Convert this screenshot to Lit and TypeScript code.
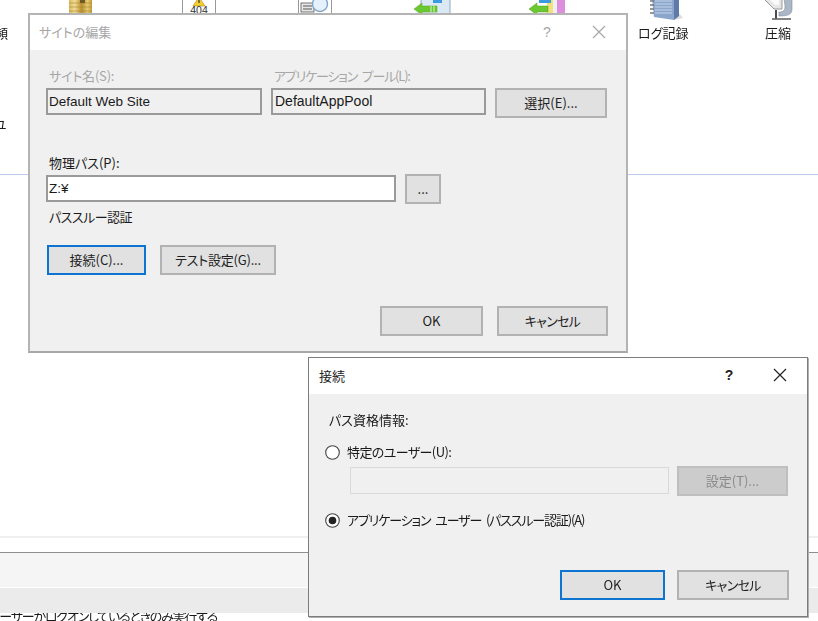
import { LitElement, html, css, svg } from "lit";
import { customElement } from "lit/decorators.js";

const closeIcon = (color: string) => html`<svg class="x" width="14" height="14" viewBox="0 0 14 14"><path d="M1 1L13 13M13 1L1 13" stroke="${color}" stroke-width="1.2" fill="none"/></svg>`;

const coin = svg`<defs><linearGradient id="gold" x1="0" x2="1" y1="0" y2="0">
  <stop offset="0" stop-color="#d9b95c"/><stop offset=".25" stop-color="#f1dc94"/><stop offset=".55" stop-color="#b98f2f"/><stop offset=".8" stop-color="#e6cb72"/><stop offset="1" stop-color="#c29c3c"/></linearGradient></defs>
  <rect x="1" y="-3" width="23" height="18" fill="url(#gold)"/>
  <path d="M1 3h23M1 7h23M1 11h23" stroke="#a5832c" stroke-width=".8" opacity=".7"/>
  <rect x="12" y="-1" width="5" height="4" fill="#6e5a24"/>`;

@customElement("app-root")
export class AppRoot extends LitElement {
  static styles = css`
    :host { display: block; position: relative; width: 818px; height: 621px; overflow: hidden; background: #fff;
      font-family: "Noto Sans CJK JP", "Liberation Sans", sans-serif; font-size: 13px; color: #1a1a1a; font-feature-settings: "palt"; }
    .page { filter: blur(0.45px); width: 818px; height: 621px; position: relative; }
    .bg { display: flex; flex-direction: column; height: 621px; }
    .icons { height: 174px; border-bottom: 1px solid #bccbea; position: relative; }
    .gap { height: 361px; border-bottom: 2px solid #efefef; }
    .white { height: 14px; border-bottom: 1px solid #8e8e8e; }
    .band1 { height: 34px; background: #f5f5f5; border-bottom: 1px solid #fff; }
    .band2 { height: 25px; background: #ebebeb; }
    .status { height: 8px; overflow: hidden; white-space: nowrap; }
    .status span { display: block; margin-top: -6px; line-height: 18px; margin-left: -12px; letter-spacing: -1.25px; }
    .ico { position: absolute; top: 0; }
    .lbl { position: absolute; font-size: 13px; line-height: 16px; white-space: nowrap; top: 25px; }

    .dlg { position: absolute; box-sizing: border-box; background: #f0f0f0; display: flex; flex-direction: column; }
    .d1 { left: 28px; top: 13px; width: 600px; height: 340px; border: 2px solid #b4b4b4; border-bottom-color: #a8a8a8; }
    .d2 { left: 308px; top: 357px; width: 500px; height: 260px; border: 1px solid #7c7c7c; box-shadow: 1px 1px 0 #b0b0b0; }
    .title { background: #fff; display: flex; align-items: center; flex: none; }
    .d1 .title { height: 35px; padding: 0 20px 2px 9px; box-sizing: border-box; color: #a6a6a6; }
    .d2 .title { height: 36px; padding: 0 20px 2px 10px; box-sizing: border-box; color: #222; }
    .t { flex: 1; font-size: 13px; }
    .q { width: 14px; text-align: center; font-family: "Liberation Sans", sans-serif; font-size: 14px; margin-right: 38px; }
    .d2 .q { margin-right: 37px; font-weight: bold; }
    .body { flex: 1; display: flex; flex-direction: column; }
    .d1 .body { padding: 17px 18px 0 16px; }

    .lab { font-size: 13px; line-height: 18px; padding-left: 2px; }
    .dis { color: #a6a6a6; }
    .pool { letter-spacing: -1.2px; word-spacing: 3px; padding-left: 3px; }
    .site { letter-spacing: -0.2px; padding-left: 3px; }
    .field { box-sizing: border-box; height: 27px; border: 2px solid #9a9a9a; font-family: "Liberation Sans", "Noto Sans CJK JP", sans-serif;
      font-size: 13.5px; line-height: 23px; padding-left: 1px; color: #1a1a1a; }
    .field.ro { background: #f0f0f0; margin-top: 3px; }
    .field.wh { background: #fff; margin-top: 1px; }
    .field.wide { font-size: 14px; padding-left: 2px; }
    .btn { box-sizing: border-box; background: #e1e1e1; border: 2px solid #b2b2b2; display: flex; align-items: center; justify-content: center; font-size: 13px; color: #222; padding-bottom: 2px; }
    .btn.def { border-color: #0d74d1; }
    .btn.off { background: #cccccc; border-color: #bfbfbf; color: #8a8a8a; }
    .kana { letter-spacing: -0.7px; }
    .test { letter-spacing: -0.2px; }

    .tops { display: grid; grid-template-columns: 216px 215px 112px; column-gap: 9px; }
    .selcol { padding-top: 21px; }
    .sel { height: 30px; }
    .phys { margin-top: 35px; }
    .phys .lab { line-height: 20px; padding-left: 3px; }
    .path { display: flex; gap: 9px; margin-top: 1px; align-items: flex-start; }
    .path .field { width: 350px; }
    .dots { width: 36px; height: 30px; }
    .pass { margin-top: 3px; line-height: 20px; letter-spacing: -0.5px; padding-left: 3px; }
    .acts { display: flex; gap: 14px; margin-top: 18px; padding-left: 1px; }
    .acts .a { width: 99px; height: 30px; }
    .acts .b { width: 116px; height: 30px; }
    .foot { display: flex; justify-content: flex-end; gap: 14px; margin-top: 31px; }
    .foot .btn { height: 30px; }
    .foot .ok { width: 103px; }
    .foot .cancel { width: 111px; }

    .d2 .body { padding: 16px 18px 0 16px; }
    .creds { padding-left: 4px; line-height: 20px; }
    .radio { display: flex; align-items: center; gap: 7px; margin-top: 12px; line-height: 20px; }
    .r1 { letter-spacing: -0.6px; }
    .r2 { letter-spacing: -1.15px; word-spacing: 3px; }
    .circ { width: 15px; height: 15px; flex: none; }
    .spec { display: flex; gap: 8px; padding-left: 25px; margin-top: 4px; align-items: flex-start; }
    .spec .inp { width: 319px; height: 27px; box-sizing: border-box; background: #f0f0f0; border: 1px solid #d9d9d9; margin-top: 1px; }
    .spec .btn { width: 111px; height: 30px; }
    .app { margin-top: 14px; }
    .d2foot { display: flex; justify-content: flex-end; gap: 12px; margin-top: 40px; }
    .d2foot .btn { height: 30px; }
    .d2foot .ok { width: 105px; }
    .d2foot .cancel { width: 112px; }
  `;

  render() {
    return html`<div class="page">
      <div class="bg">
        <div class="icons">
          <div class="lbl" style="left:-5px">頻</div>
          <div class="lbl" style="left:-6px;top:116px">ユ</div>
          <svg class="ico" style="left:68px" width="26" height="16" viewBox="0 0 26 16">${coin}</svg>
          <svg class="ico" style="left:182px" width="35" height="16" viewBox="0 0 35 16">
            <rect x="0.5" y="-3" width="33" height="22" fill="#fff" stroke="#999"/>
            <path d="M17 -3L23 6H11Z" fill="#f5cf2f" stroke="#a88a10" stroke-width=".6"/>
            <path d="M17 0v3" stroke="#333" stroke-width="1.2"/>
            <text x="17" y="14" text-anchor="middle" font-family="Liberation Sans" font-size="10.5" fill="#333">404</text>
          </svg>
          <svg class="ico" style="left:298px" width="35" height="16" viewBox="0 0 35 16">
            <rect x="0.5" y="-3" width="33" height="22" fill="#fff" stroke="#999"/>
            <rect x="3" y="3" width="13" height="9" fill="#e8e8e8" stroke="#555" stroke-width=".8"/>
            <path d="M5 6h9M5 9h9" stroke="#555"/>
            <circle cx="22" cy="4" r="7.5" fill="#e6f2fb" stroke="#7ea5c8" stroke-width="1.4"/>
          </svg>
          <svg class="ico" style="left:413px" width="38" height="16" viewBox="0 0 38 16">
            <rect x="8" y="-3" width="29" height="17" rx="1" fill="#dbe8f5" stroke="#93a9c0"/>
            <path d="M20 -2h9v5h-9z" fill="#3b9ae0"/>
            <path d="M1 9L9 3V6H24V12H9V15Z" fill="#6cc832" stroke="#4da61f" stroke-width=".5"/>
            <path d="M18 6v6M21 6v6" stroke="#d9f5c0"/>
          </svg>
          <svg class="ico" style="left:529px" width="38" height="16" viewBox="0 0 38 16">
            <rect x="18" y="-3" width="6" height="17" fill="#f3e27a"/>
            <rect x="24" y="-3" width="4" height="17" fill="#eef0f5"/>
            <rect x="28" y="-3" width="8" height="17" fill="#dd8fdd"/>
            <path d="M10 -2h12v5H10z" fill="#3b9ae0"/>
            <path d="M0 9L8 3V6H19V12H8V15Z" fill="#6cc832" stroke="#4da61f" stroke-width=".5"/>
          </svg>
          <svg class="ico" style="left:648px" width="38" height="22" viewBox="0 0 38 22">
            <path d="M27 20L35 18L30 12Z" fill="#ddd"/>
            <path d="M4 -2H26V20L6 17Z" fill="#8aa6cc"/>
            <path d="M7 1h17M7 4h17M7 7h17M7 10h17M7 13h17" stroke="#c7d6ea"/>
            <path d="M26 -2h5V16l-5 4Z" fill="#5f7aa5"/>
            <path d="M2 1h4M2 5h4M2 9h4M2 13h4" stroke="#777" stroke-width="1.4"/>
          </svg>
          <svg class="ico" style="left:762px" width="34" height="22" viewBox="0 0 34 22">
            <path d="M1 -2L12 9H20V-2Z" fill="#e6e6e6" stroke="#9a9a9a"/>
            <path d="M6 -2L13 5H17V-2Z" fill="#fafafa"/>
            <path d="M22 -2H30V9C30 15 25 16 17 16V12C22 12 23 10 23 6Z" fill="#a9b7c6" stroke="#7f8c9b" stroke-width=".6"/>
            <path d="M14 10v9" stroke="#4c4c4c" stroke-width="2"/>
            <path d="M10 19H29" stroke="#666" stroke-width="1.6"/>
          </svg>
          <div class="lbl" style="left:638px;top:25px">ログ記録</div>
          <div class="lbl" style="left:765px;top:25px">圧縮</div>
        </div>
        <div class="gap"></div>
        <div class="white"></div>
        <div class="band1"></div>
        <div class="band2"></div>
        <div class="status"><span>ユーザーがログオンしているときのみ実行する</span></div>
      </div>

      <div class="dlg d1">
        <div class="title"><span class="t">サイトの編集</span><span class="q">?</span>${closeIcon("#a6a6a6")}</div>
        <div class="body">
          <div class="tops">
            <div><div class="lab dis site">サイト名(S):</div><div class="field ro">Default Web Site</div></div>
            <div><div class="lab dis pool">アプリケーション プール(L):</div><div class="field ro wide">DefaultAppPool</div></div>
            <div class="selcol"><div class="btn sel">選択(E)...</div></div>
          </div>
          <div class="phys">
            <div class="lab">物理パス(P):</div>
            <div class="path"><div class="field wh">Z:¥</div><div class="btn dots">...</div></div>
          </div>
          <div class="pass lab">パススルー認証</div>
          <div class="acts"><div class="btn def a">接続(C)...</div><div class="btn b test">テスト設定(G)...</div></div>
          <div class="foot"><div class="btn ok">OK</div><div class="btn cancel kana">キャンセル</div></div>
        </div>
      </div>

      <div class="dlg d2">
        <div class="title"><span class="t">接続</span><span class="q">?</span>${closeIcon("#222")}</div>
        <div class="body">
          <div class="creds">パス資格情報:</div>
          <div class="radio">
            <svg class="circ" viewBox="0 0 15 15"><circle cx="7.5" cy="7.5" r="6.8" fill="#fff" stroke="#444" stroke-width="1.1"/></svg>
            <span class="r1">特定のユーザー(U):</span>
          </div>
          <div class="spec"><div class="inp"></div><div class="btn off">設定(T)...</div></div>
          <div class="radio app">
            <svg class="circ" viewBox="0 0 15 15"><circle cx="7.5" cy="7.5" r="6.8" fill="#fff" stroke="#444" stroke-width="1.1"/><circle cx="7.5" cy="7.5" r="3.8" fill="#222"/></svg>
            <span class="r2">アプリケーション ユーザー (パススルー認証)(A)</span>
          </div>
          <div class="d2foot"><div class="btn def ok">OK</div><div class="btn cancel kana">キャンセル</div></div>
        </div>
      </div>
    </div>`;
  }
}
